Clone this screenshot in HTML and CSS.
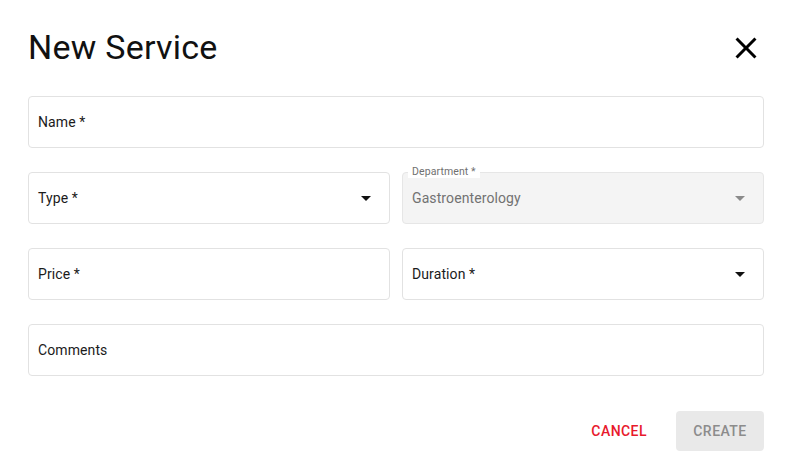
FILE: index.html
```html
<!DOCTYPE html>
<html lang="en">
<head>
<meta charset="utf-8">
<title>New Service</title>
<link rel="stylesheet" href="styles.css">
</head>
<body>
<div class="dialog">
  <header class="dialog-header">
    <h1 class="dialog-title">New Service</h1>
    <button class="close-btn" aria-label="close">
      <svg viewBox="0 0 24 24" width="36" height="36"><path d="M19 6.41 17.59 5 12 10.59 6.41 5 5 6.41 10.59 12 5 17.59 6.41 19 12 13.41 17.59 19 19 17.59 13.41 12z"/></svg>
    </button>
  </header>
  <form class="form-grid">
    <div class="field span-2"><span class="field-text">Name *</span></div>
    <div class="field select"><span class="field-text">Type *</span>
      <svg class="arrow" viewBox="0 0 24 24" width="24" height="24"><path d="M7 10l5 5 5-5z"/></svg>
    </div>
    <div class="field select disabled">
      <span class="float-label">Department *</span>
      <span class="field-text value">Gastroenterology</span>
      <svg class="arrow" viewBox="0 0 24 24" width="24" height="24"><path d="M7 10l5 5 5-5z"/></svg>
    </div>
    <div class="field"><span class="field-text">Price *</span></div>
    <div class="field select"><span class="field-text">Duration *</span>
      <svg class="arrow" viewBox="0 0 24 24" width="24" height="24"><path d="M7 10l5 5 5-5z"/></svg>
    </div>
    <div class="field span-2"><span class="field-text">Comments</span></div>
  </form>
  <footer class="dialog-actions">
    <button class="btn btn-text">Cancel</button>
    <button class="btn btn-disabled" disabled>Create</button>
  </footer>
</div>
</body>
</html>
```
FILE: styles.css
```css
* { box-sizing: border-box; }
html, body { margin: 0; padding: 0; background: #fff; }
body {
  font-family: Roboto, "Liberation Sans", Arial, sans-serif;
  color: rgba(0,0,0,0.87);
  width: 788px;
  height: 476px;
  overflow: hidden;
}
.dialog {
  padding: 26px 24px 0 28px;
}
.dialog-header {
  display: flex;
  align-items: center;
  justify-content: space-between;
  height: 42px;
}
.dialog-title {
  margin: 0;
  font-size: 34px;
  font-weight: 400;
  line-height: 42px;
  letter-spacing: 0.25px;
  color: #111;
}
.close-btn {
  border: 0;
  background: none;
  padding: 0;
  width: 36px;
  height: 36px;
  margin-right: 0;
  margin-top: 1px;
  display: flex;
  align-items: center;
  justify-content: center;
  cursor: pointer;
}
.close-btn svg { fill: #000; display: block; }
.form-grid {
  margin: 28px 0 0 0;
  width: 736px;
  display: grid;
  grid-template-columns: 1fr 1fr;
  grid-auto-rows: 52px;
  gap: 24px 12px;
}
.span-2 { grid-column: span 2; }
.field {
  position: relative;
  border: 1px solid #e2e2e2;
  border-radius: 4px;
  display: flex;
  align-items: center;
  justify-content: space-between;
  padding: 0 11px 0 9px;
  background: #fff;
}
.field-text {
  font-size: 14px;
  line-height: 20px;
  color: #1b1b1b;
  letter-spacing: 0.1px;
}
.arrow { fill: #111; display: block; }
.disabled {
  background: #f4f4f4;
  border-color: #e6e6e6;
}
.disabled .arrow { fill: #8a8a8a; }
.value { color: #727272; }
.float-label {
  position: absolute;
  left: 5px;
  top: -7px;
  padding: 0 4px;
  font-size: 10.5px;
  line-height: 12px;
  color: #707070;
  background: #fff;
  letter-spacing: 0.1px;
}
.dialog-actions {
  width: 736px;
  margin-top: 35px;
  display: flex;
  justify-content: flex-end;
  align-items: center;
  gap: 13px;
}
.btn {
  font-family: Roboto, "Liberation Sans", Arial, sans-serif;
  font-size: 14px;
  font-weight: 500;
  letter-spacing: 0.45px;
  text-transform: uppercase;
  height: 40px;
  border: 0;
  border-radius: 4px;
  padding: 0 16px;
  background: none;
}
.btn-text { color: #e8192c; cursor: pointer; }
.btn-disabled {
  background: #e9e9e9;
  color: #8c8c8c;
  min-width: 88px;
}
```
